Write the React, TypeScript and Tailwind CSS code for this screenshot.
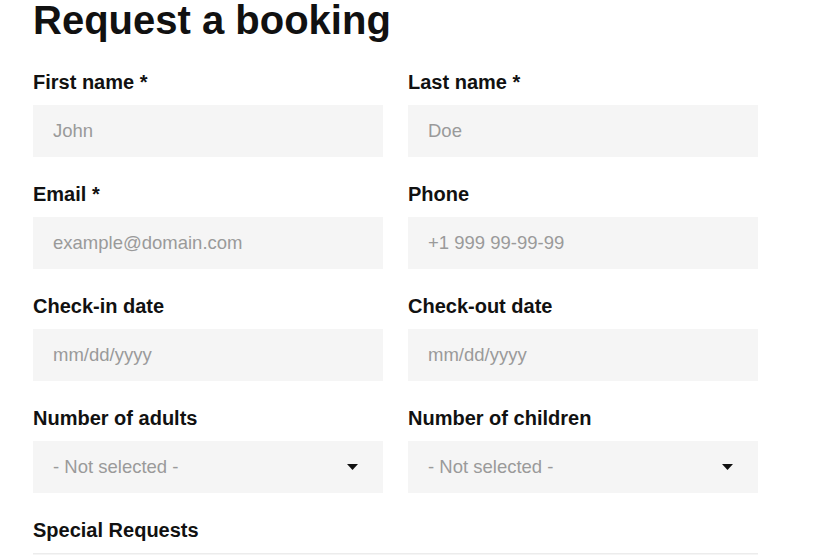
import React from "react";

const font = { fontFamily: '"Liberation Sans", Arial, sans-serif' };

function Field({ label, placeholder }: { label: string; placeholder: string }) {
  return (
    <div className="flex flex-col">
      <label className="text-[20px] leading-[24px] font-bold text-[#111] mb-[11px]">{label}</label>
      <input
        type="text"
        placeholder={placeholder}
        className="h-[52px] w-full bg-[#f5f5f5] px-[20px] text-[18.5px] text-[#333] placeholder:text-[#9a9a9a] outline-none border-0"
      />
    </div>
  );
}

function SelectField({ label }: { label: string }) {
  return (
    <div className="flex flex-col">
      <label className="text-[20px] leading-[24px] font-bold text-[#111] mb-[11px]">{label}</label>
      <div className="h-[52px] w-full bg-[#f5f5f5] pl-[20px] pr-[25px] flex items-center justify-between">
        <span className="text-[18.5px] text-[#9a9a9a]">- Not selected -</span>
        <svg width="11" height="6" viewBox="0 0 11 6">
          <path d="M0 0 H11 L5.5 6 Z" fill="#111" />
        </svg>
      </div>
    </div>
  );
}

export default function App() {
  return (
    <div className="min-h-screen bg-white pl-[33px]" style={font}>
      <h1 className="text-[40px] leading-[40px] font-bold text-[#111] mb-[30px]">Request a booking</h1>
      <div className="grid grid-cols-[350px_350px] gap-x-[25px] gap-y-[25px]">
        <Field label="First name *" placeholder="John" />
        <Field label="Last name *" placeholder="Doe" />
        <Field label="Email *" placeholder="example@domain.com" />
        <Field label="Phone" placeholder="+1 999 99-99-99" />
        <Field label="Check-in date" placeholder="mm/dd/yyyy" />
        <Field label="Check-out date" placeholder="mm/dd/yyyy" />
        <SelectField label="Number of adults" />
        <SelectField label="Number of children" />
        <div className="col-span-2 flex flex-col">
          <label className="text-[20px] leading-[24px] font-bold text-[#111] mb-[11px]">Special Requests</label>
          <textarea className="h-[120px] w-full bg-[#f5f5f5] border-t border-[#ececec] outline-none resize-none" />
        </div>
      </div>
    </div>
  );
}
